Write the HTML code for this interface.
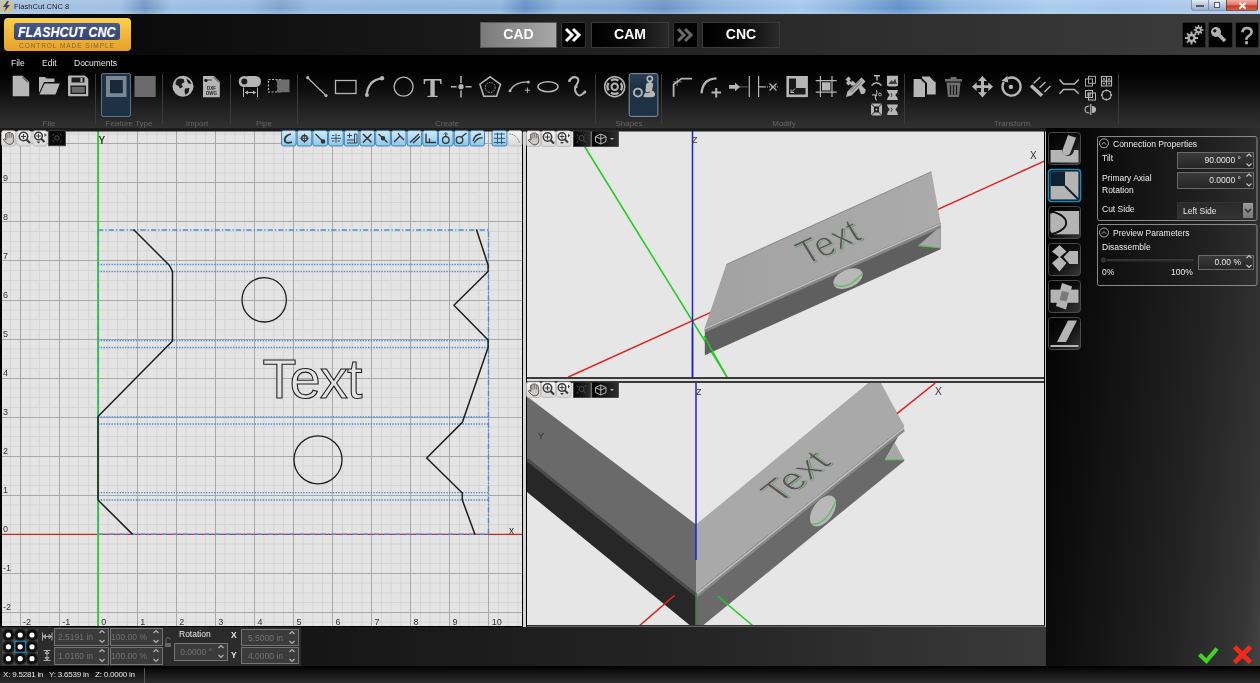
<!DOCTYPE html>
<html><head><meta charset="utf-8">
<style>
*{box-sizing:border-box}
html,body{margin:0;padding:0}
svg,div{will-change:transform}
body{width:1260px;height:683px;overflow:hidden;position:relative;background:#000;font-family:"Liberation Sans",sans-serif}
.a{position:absolute}
#title{left:0;top:0;width:1260px;height:14px;background:linear-gradient(90deg,#a4c2e2 0.0%,#a0c0e2 9.5%,#7296c4 11.5%,#9cbee2 13.5%,#98bade 19.8%,#7ea2cc 22.2%,#94b8de 24.6%,#8eb4dc 39.7%,#6490c4 41.7%,#8cb2da 44.4%,#86acd8 49.2%,#6c94c6 52.8%,#8cb2dc 56.3%,#a8c8ec 63.5%,#8ab2de 67.5%,#6090c8 71.4%,#8eb6e0 75.4%,#accced 83.3%,#a4c6ea 88.9%,#b0cdec 100.0%)}
#title:after{content:"";position:absolute;left:0;top:0;width:1260px;height:14px;background:linear-gradient(rgba(255,255,255,0.12),rgba(255,255,255,0) 60%,rgba(200,220,240,0.35))}
#title .t{left:14px;top:2px;font-size:7.6px;color:#1a1a1a;line-height:10px}
#hdr{left:0;top:14px;width:1260px;height:41px;background:linear-gradient(90deg,#050505 0%,#0a0a0a 10%,#1a1a1a 38%,#2a2a2a 62%,#3a3a3a 94%,#3c3c3c 100%)}
#menu{left:0;top:55px;width:1260px;height:15px;background:#000}
#menu span{position:absolute;top:3px;font-size:8.5px;color:#e8e8e8;line-height:10px}
#ribbon{left:0;top:70px;width:1260px;height:59px;background:linear-gradient(180deg,#000 0%,#0c0c0c 30%,#262626 75%,#323232 100%)}
.rl{position:absolute;top:49px;font-size:8px;color:#646464;line-height:9px;transform:translateX(-50%);white-space:nowrap}
.sep{position:absolute;top:4px;width:1px;height:50px;background:#3a3a3a}
#band{left:0;top:128px;width:1260px;height:3px;background:#1a1a1a}
.gl{font-size:9px;fill:#333;font-family:"Liberation Sans",sans-serif}
.btn{position:absolute;height:16px;width:15px;background:linear-gradient(#f4f4f4,#d8d8d8);border:1px solid #9a9a9a;border-radius:2px}
.bbtn{position:absolute;height:16px;width:15px;background:linear-gradient(#bfe0f6,#86bfe6);border:1px solid #4d86b0;border-radius:2px}
.dbtn{position:absolute;height:16px;background:#111;border:1px solid #333}
.inp{position:absolute;background:#3b3b3b;border:1px solid #747474;color:#737373;font-size:8.5px;line-height:16px;text-align:right;padding-right:15px;white-space:nowrap;overflow:hidden}
.pinp{position:absolute;background:linear-gradient(#3a3a3a,#262626);border:1px solid #6a6a6a;color:#e8e8e8;font-size:8.5px;line-height:15px;text-align:right;padding-right:12px;white-space:nowrap}
.pl{position:absolute;font-size:8.5px;color:#ececec;line-height:10px;white-space:nowrap}
</style></head><body>
<div id="title" class="a"><div class="a t">FlashCut CNC 8</div>
<svg class="a" style="left:1px;top:1px" width="11" height="11"><rect x="0" y="0" width="11" height="11" fill="#e8c040" opacity="0.7"/><path d="M6,0 L2,6 L5,6 L3,11 L9,4 L6,4 L8,0Z" fill="#2a3a8a"/></svg>
<div class="a" style="left:1191px;top:0;width:18px;height:11px;border:1px solid #7a8aa8;border-top:none;border-radius:0 0 0 3px;background:linear-gradient(#dde8f4,#b5c8e0 50%,#9ab2d2)"></div>
<div class="a" style="left:1196px;top:5px;width:8px;height:2px;background:#fff;border:0.5px solid #555"></div>
<div class="a" style="left:1208px;top:0;width:19px;height:11px;border:1px solid #7a8aa8;border-top:none;background:linear-gradient(#dde8f4,#b5c8e0 50%,#9ab2d2)"></div>
<div class="a" style="left:1214px;top:2px;width:6px;height:6px;border:1px solid #555;background:#eee"></div>
<div class="a" style="left:1226px;top:0;width:32px;height:11px;border:1px solid #7a3a2a;border-top:none;border-radius:0 0 3px 0;background:linear-gradient(#eea898,#e07060 45%,#c83820 60%,#d05a40)"></div>
<svg class="a" style="left:1236px;top:1px" width="12" height="10"><path d="M3.3,1.8 L9.7,7.8 M9.7,1.8 L3.3,7.8" stroke="#f4f4f4" stroke-width="2"/></svg>
</div>
<div id="hdr" class="a"></div>
<!-- logo -->
<div class="a" style="left:4px;top:18px;width:127px;height:33px;border-radius:4px;background:linear-gradient(#fccf4e,#f2b73a 50%,#e6a12c);box-shadow:0 0 1px #000"></div>
<div class="a" style="left:14px;top:23px;width:106px;height:17px;border-radius:3px;background:linear-gradient(#4a5a8c,#3a4a7c 60%,#34437a)"></div>
<div class="a" style="left:18px;top:24px;width:100px;height:16px;font-size:14px;font-weight:bold;font-style:italic;color:#fff;line-height:16px;white-space:nowrap;transform:scaleX(0.89);transform-origin:0 0;text-shadow:0 0 1px #ccc">FLASHCUT CNC</div>
<div class="a" style="left:19px;top:42px;font-size:6.5px;color:#7d6838;line-height:7px;letter-spacing:0.95px;white-space:nowrap">CONTROL MADE SIMPLE</div>
<!-- mode buttons -->
<div class="a" style="left:480px;top:22px;width:77px;height:26px;background:linear-gradient(90deg,#7a7a7a,#a8a8a8);border:1px solid #555;color:#fff;font-weight:bold;font-size:14px;line-height:23px;text-align:center">CAD</div>
<div class="a" style="left:561px;top:22px;width:25px;height:26px;background:#000;border:1px solid #333;border-radius:2px"></div>
<svg class="a" style="left:561px;top:22px" width="25" height="26"><path d="M5,7 L11,13 L5,19 M12,7 L18,13 L12,19" stroke="#fff" stroke-width="3" fill="none" stroke-linejoin="miter"/></svg>
<div class="a" style="left:591px;top:22px;width:78px;height:26px;background:linear-gradient(90deg,#000 0%,#0a0a0a 50%,#2a2a2a 100%);border:1px solid #3a3a3a;color:#fff;font-weight:bold;font-size:14px;line-height:23px;text-align:center">CAM</div>
<div class="a" style="left:673px;top:22px;width:25px;height:26px;background:#000;border:1px solid #333;border-radius:2px"></div>
<svg class="a" style="left:673px;top:22px" width="25" height="26"><path d="M5,7 L11,13 L5,19 M12,7 L18,13 L12,19" stroke="#6a6a6a" stroke-width="3" fill="none"/></svg>
<div class="a" style="left:702px;top:22px;width:78px;height:26px;background:linear-gradient(90deg,#000 0%,#0a0a0a 50%,#2a2a2a 100%);border:1px solid #3a3a3a;color:#fff;font-weight:bold;font-size:14px;line-height:23px;text-align:center">CNC</div>
<!-- right header buttons -->
<div class="a" style="left:1182px;top:22px;width:24px;height:26px;background:#000;border:1px solid #2a2a2a;border-radius:2px"></div>
<div class="a" style="left:1208px;top:22px;width:25px;height:26px;background:#000;border:1px solid #2a2a2a;border-radius:2px"></div>
<div class="a" style="left:1235px;top:22px;width:24px;height:26px;background:#000;border:1px solid #2a2a2a;border-radius:2px"></div>
<svg class="a" style="left:1182px;top:22px" width="78" height="26">
  <g fill="#b0b0b0">
    <circle cx="9.5" cy="16" r="4.2"/>
    <circle cx="16.5" cy="8" r="3.2"/>
  </g>
  <g stroke="#b0b0b0" stroke-width="2">
    <path d="M9.5,9.5 V22.5 M3,16 H16 M4.9,11.4 L14.1,20.6 M4.9,20.6 L14.1,11.4"/>
    <path d="M16.5,3 V13 M11.5,8 H21.5 M13,4.5 L20,11.5 M13,11.5 L20,4.5" stroke-width="1.6"/>
  </g>
  <circle cx="9.5" cy="16" r="1.8" fill="#000"/>
  <circle cx="16.5" cy="8" r="1.3" fill="#000"/>
  <circle cx="34" cy="10" r="5" fill="#b0b0b0"/>
  <circle cx="32.8" cy="8.8" r="1.6" fill="#000"/>
  <path d="M36,12 L43,19" stroke="#b0b0b0" stroke-width="3.5"/>
  <text x="65" y="21.5" style="font-family:'Liberation Sans',sans-serif;font-size:23px" fill="#b0b0b0" stroke="#b0b0b0" stroke-width="0.6" text-anchor="middle">?</text>
</svg>
<div id="menu" class="a"><span style="left:11px">File</span><span style="left:42px">Edit</span><span style="left:74px">Documents</span></div>
<div id="ribbon" class="a">
  <div class="rl" style="left:49px">File</div>
  <div class="rl" style="left:129px">Feature Type</div>
  <div class="rl" style="left:197px">Import</div>
  <div class="rl" style="left:264px">Pipe</div>
  <div class="rl" style="left:447px">Create</div>
  <div class="rl" style="left:629px">Shapes</div>
  <div class="rl" style="left:784px">Modify</div>
  <div class="rl" style="left:1012px">Transform</div>
  <div class="sep" style="left:95px"></div>
  <div class="sep" style="left:162px"></div>
  <div class="sep" style="left:230px"></div>
  <div class="sep" style="left:297px"></div>
  <div class="sep" style="left:595px"></div>
  <div class="sep" style="left:661px"></div>
  <div class="sep" style="left:904px"></div>
  <div class="sep" style="left:1118px"></div>
</div>
<svg class="a" style="left:0;top:0" width="1260" height="128" viewBox="0 0 1260 128">
 <g fill="#b6b6b6" stroke="none">
  <!-- new doc -->
  <path d="M12.7,75.8 H22.6 L29.2,82 V96.3 H12.7Z"/>
  <path d="M22.5,77 L28,82.5" stroke="#222" stroke-width="1"/>
  <!-- folder -->
  <path d="M39,77 H45 L46.5,78.5 H54.5 V82 H44 L39,93 Z"/>
  <path d="M44.5,83.5 H59.8 L55.5,94.5 H39.5 Z"/>
  <!-- save -->
  <path d="M68,76.5 Q68,75.5 69,75.5 H85 L88.3,78.8 V95.3 Q88.3,96.3 87.3,96.3 H69 Q68,96.3 68,95.3Z"/>
  <rect x="71.5" y="77.5" width="13" height="5" fill="#1a1a1a"/>
  <rect x="80.5" y="78" width="2" height="4" fill="#b6b6b6"/>
  <rect x="70.5" y="85.5" width="15.5" height="8.5" fill="#1a1a1a"/>
  <rect x="71.8" y="86.8" width="12.9" height="6" fill="#6a6a6a"/>
  <!-- feature type selected -->
  <rect x="101.5" y="73.5" width="29" height="43" rx="2" fill="#1d3245" stroke="#4b6b82" stroke-width="1"/>
  <rect x="106" y="76" width="20.5" height="21" fill="#7b8893"/>
  <rect x="110" y="80" width="12.8" height="13.2" fill="#182a3a"/>
  <rect x="134.5" y="76" width="21.2" height="21" fill="#6b6b6b"/>
  <!-- globe -->
  <circle cx="183" cy="86.3" r="10.5"/>
  <path d="M177,79.5 Q180,78 183.5,79 L184.5,82 L181.5,84 L183,87 L180,88.5 L178.5,86 L175.5,84.5 Q175.5,81.5 177,79.5Z M185,88.5 L189.5,88 L188.5,92.5 L185.5,95 L184.5,91.5Z M186.5,78.5 Q190,80 191.5,84 L188.5,83.5 L187,81Z" fill="#1a1a1a"/>
  <!-- dxf dwg -->
  <path d="M203,76 H214 L219.8,81.8 V97.2 H203Z"/>
  <path d="M213.5,77 L219,82.5 M204,80 H212" stroke="#1a1a1a" stroke-width="0.8"/>
  <circle cx="206" cy="80.5" r="1.6" fill="#1a1a1a"/>
  <text x="211.5" y="89.5" text-anchor="middle" style="font-family:'Liberation Sans',sans-serif;font-size:4.5px;font-weight:bold" fill="#1a1a1a">DXF</text>
  <text x="211.5" y="95" text-anchor="middle" style="font-family:'Liberation Sans',sans-serif;font-size:4.5px;font-weight:bold" fill="#1a1a1a">DWG</text>
  <!-- pipe -->
  <rect x="243" y="76" width="18" height="11" rx="5.5"/>
  <circle cx="244.3" cy="81.5" r="5.6"/>
  <circle cx="244.3" cy="81.5" r="3" fill="#1a1a1a"/>
  <path d="M243.5,87.5 V97 M257.5,87.5 V97 M245,92.5 H256" stroke="#b6b6b6" stroke-width="1" fill="none"/>
  <path d="M245,92.5 L248,90.5 V94.5Z M256,92.5 L253,90.5 V94.5Z"/>
  <rect x="268.5" y="79.5" width="12" height="12.5" fill="none" stroke="#b6b6b6" stroke-width="1.2" stroke-dasharray="2,1.5"/>
  <path d="M275,79.5 H289.5 V92.3 H275 Q279,89 276.5,86 Q279,83 275,79.5Z" fill="#6e6e6e"/>
 </g>
 <!-- create -->
 <g stroke="#b6b6b6" fill="none" stroke-width="1.3">
  <path d="M307.7,77.7 L326,95.6"/>
  <rect x="335.5" y="80.5" width="20.5" height="13"/>
  <path d="M366.7,95 Q368,80 382,78.3" stroke-width="2.3"/>
  <circle cx="403.6" cy="86.7" r="9.5" stroke-width="1.3"/>
  <path d="M461,76 V83 M461,90.5 V97.5 M451,86.7 H456.5 M465.5,86.7 H471.6" stroke-width="1.5"/>
  <path d="M490.2,76.8 L500.5,84.2 L496.6,96.3 H483.8 L479.9,84.2Z" stroke-width="1.6"/>
  <circle cx="490.2" cy="87.5" r="5" stroke-width="0.9" stroke-dasharray="1.5,1.2"/>
  <path d="M510,90.8 Q514,82 528.3,81.9" stroke-width="1.3"/>
  <path d="M527.4,87.5 V93 M524.7,90.2 H530.1" stroke-width="1"/>
  <ellipse cx="548" cy="86.7" rx="10" ry="5" stroke-width="1.5"/>
  <path d="M569.4,80.7 Q572,76 576.5,77.5 Q580,79 577,84 Q573.5,88.5 576,92.5 Q578.5,97.5 582.5,94 L584.9,92" stroke-width="2"/>
 </g>
 <g fill="#b6b6b6">
  <circle cx="307.7" cy="77.7" r="1.6"/><circle cx="326" cy="95.6" r="1.6"/>
  <circle cx="366.9" cy="95" r="2"/><circle cx="382" cy="78.3" r="2.2"/>
  <circle cx="461" cy="86.7" r="2.6"/>
  <circle cx="510" cy="90.8" r="1.5"/><circle cx="528.3" cy="81.9" r="1.5"/>
  <circle cx="569.4" cy="80.7" r="1.4"/><circle cx="576" cy="86.7" r="1.6"/><circle cx="584.9" cy="92" r="1.4"/>
  <text x="432.6" y="97" text-anchor="middle" style="font-family:'Liberation Serif',serif;font-size:28px;font-weight:bold">T</text>
 </g>
 <!-- shapes -->
 <g stroke="#b6b6b6" fill="none">
  <circle cx="614.7" cy="86.7" r="10" stroke-width="1.5"/>
  <circle cx="614.7" cy="86.7" r="3.2" stroke-width="2"/>
  <path d="M611,80.6 A7,7 0 0 1 618.4,80.6 M620.8,83 A7,7 0 0 1 620.8,90.4 M618.4,92.8 A7,7 0 0 1 611,92.8 M608.6,90.4 A7,7 0 0 1 608.6,83" stroke-width="2.2"/>
 </g>
 <defs><linearGradient id="selb" x1="0" y1="0" x2="0" y2="1"><stop offset="0" stop-color="#2a3f55"/><stop offset="0.3" stop-color="#1d3145"/><stop offset="1" stop-color="#1f3347"/></linearGradient></defs>
 <rect x="629.2" y="73.6" width="28.7" height="42.8" rx="2" fill="url(#selb)" stroke="#8593a0" stroke-width="1"/>
 <g fill="#b6b6b6" stroke="none">
  <path d="M646,84.5 Q647.5,81.5 650.5,82 Q653.5,82.5 653,85.5 L652,90.5 Q655.5,92 655,95 Q654.5,97.2 651,97.2 H644.5 Q643,97 643.5,95.5 L645.5,92.5 Z"/>
  <circle cx="649.8" cy="78.8" r="2.6" fill="none" stroke="#b6b6b6" stroke-width="1.6"/>
  <circle cx="637.9" cy="92.6" r="4" fill="none" stroke="#b6b6b6" stroke-width="1.9"/>
  <path d="M644,91.5 Q647,93.5 650,92" stroke="#1d3145" stroke-width="0.8" fill="none"/>
 </g>
 <rect x="101.5" y="73.5" width="29" height="43" rx="2" fill="none" stroke="#5a7285" stroke-width="1"/>
 <!-- modify -->
 <g stroke="#b6b6b6" fill="none" stroke-width="1.8">
  <path d="M673.6,96.8 V84.5 L681.5,78.6 H692"/>
  <path d="M677.2,78 V86 M673,81.9 H681.5" stroke-width="0.7"/>
  <path d="M701.6,93.2 Q702.5,79 716.5,78.3" stroke-width="2.3"/>
  <path d="M716.2,88 V97.5 M711.5,92.6 H721" stroke-width="2"/>
  <path d="M738.5,86.9 H747.9" stroke-width="1" stroke-dasharray="1,1"/>
  <path d="M749.3,76 V97.1 M758.6,76 V97.1 M758.6,86.9 H765" stroke-width="1.2"/>
  <path d="M765,86.9 H778.5" stroke-width="1" stroke-dasharray="1,1"/>
  <path d="M769.5,83.5 L776.5,90.5 M776.5,83.5 L769.5,90.5" stroke-width="1.3"/>
  <path d="M820.4,76 V97.1 M832,76 V97.1 M815.7,80.7 H836.7 M815.7,92.1 H836.7" stroke-width="1.2"/>
 </g>
 <g fill="#b6b6b6">
  <path d="M729,85 H735 V82.5 L740,86.9 L735,91.3 V88.8 H729Z"/>
  <rect x="786.4" y="76" width="21.5" height="21.1"/>
  <path d="M789,78.5 H796 V88 H805.5 V94.5 H789Z" fill="#1a1a1a"/>
  <path d="M791,92.5 L795,88.5 M791,92.5 V89.5 M791,92.5 H794" stroke="#b6b6b6" stroke-width="1"/>
  <rect x="822" y="82.3" width="8.4" height="8.2"/>
  <path d="M858.5,87.5 L861,85 L865.5,89.5 Q866,91 865,92.5 L864,93.5 Q862.5,94.5 861,94 Z"/>
  <path d="M845.5,79.5 L848.5,76.5 L851,79 L849.5,80.5 L851,82 L852.5,80.5 L855,83 L852,86 L850,84 L848.5,85.5 L846,83 L847.5,81.5Z"/>
  <path d="M852,84 L856.5,88.5 L858.5,86.5 L854,82Z"/>
  <path d="M846,97 L847.5,91.5 L861.5,77.5 L865.5,81.5 L851.5,95.5Z"/>
  <path d="M849.5,91 L860.5,80 M851,92.5 L862,81.5" stroke="#3a3a3a" stroke-width="0.7"/>
  <path d="M874,75.8 H880 M877,75.8 V80.5 M871.5,85.5 Q876.5,80 881.5,85.5" stroke="#b6b6b6" stroke-width="1.4" fill="none"/>
  <path d="M876.5,90 Q877.5,93 876,95 Q874.5,97.5 876.5,100.5 M872,95 Q875,94.5 877,95.5" stroke="#b6b6b6" stroke-width="1.1" fill="none"/>
  <circle cx="880" cy="94.5" r="1.4" fill="none" stroke="#b6b6b6" stroke-width="0.9"/>
  <path d="M871,104 L874,107 V112 L871,115Z M882,104 L879,107 V112 L882,115Z M871.5,103.5 H881.5 L878.5,106.5 H874.5Z M871.5,115.5 H881.5 L878.5,112.5 H874.5Z"/>
  <circle cx="876.5" cy="109.5" r="1" />
  <path d="M887,75.7 H898 V85.5 L896,86.5 H889 L887,85.5Z"/>
  <path d="M888.5,84 L891.5,80 L893,82 L895,78.5 L897,84Z" fill="#3a3a3a"/>
  <path d="M887,90 H898 L897,93 Q894,95 897,97 L898,100 H887 L888,97 Q891,95 888,93Z"/>
  <path d="M891,93 Q893,95 891,97" stroke="#3a3a3a" stroke-width="1" fill="none"/>
  <path d="M887,104.5 H898 L897,107.5 Q894,109.5 897,111.5 L898,115 H887 L888,111.5 Q891,109.5 888,107.5Z"/>
  <path d="M891,107.5 Q893,109.5 891,112" stroke="#3a3a3a" stroke-width="1" fill="none"/>
 </g>
 <!-- transform -->
 <g fill="#b6b6b6">
  <path d="M913.6,79 H921 L925,83 V97 H913.6Z"/>
  <path d="M922,76.5 H930 L935.7,82 V94.5 H927 V83 L922,78Z"/>
  <path d="M921,79.5 L924.5,83 M930,77 L935,82" stroke="#1a1a1a" stroke-width="0.8"/>
  <path d="M945,79 H962 V81.5 H945Z M950.5,77 H956.5 V79 H950.5Z" fill="#6e6e6e"/>
  <path d="M946.5,82.5 H960.5 L959,97 H948Z" fill="#6e6e6e"/>
  <path d="M950.5,85 V95 M953.5,85 V95 M956.5,85 V95" stroke="#1a1a1a" stroke-width="1.2"/>
  <path d="M982.5,76 L987,81 H984 V85.3 H988.3 V82.3 L993,86.7 L988.3,91 V88 H984 V92.3 H987 L982.5,97.4 L978,92.3 H981 V88 H976.7 V91 L972,86.7 L976.7,82.3 V85.3 H981 V81 H978Z"/>
 </g>
 <g stroke="#b6b6b6" fill="none">
  <path d="M1003.8,82 A9,9 0 1 0 1008,78.3" stroke-width="2.4"/>
  <path d="M1001.5,80.8 L1007.5,75.8 L1008.2,82.5Z" fill="#b6b6b6" stroke="none"/>
  <circle cx="1010.9" cy="86.9" r="2.2" fill="#b6b6b6" stroke="none"/>
  <path d="M1031,85.5 L1042,95.8" stroke-width="3.6"/>
  <path d="M1033.5,83.5 L1040.2,77 M1039.5,87.8 L1045.5,82 M1044.5,91.8 L1050.5,86" stroke-width="1.4"/>
  <path d="M1059.5,79.4 L1063.5,83.9 H1074.4 L1078.8,79.4 M1059.5,93.8 L1063.5,89.4 H1074.4 L1078.8,93.8" stroke-width="1.5"/>
  <rect x="1088.5" y="76.3" width="7" height="7" stroke-width="0.9"/>
  <rect x="1085.5" y="79" width="7" height="7" stroke-width="0.9"/>
  <rect x="1088.5" y="93" width="7" height="7" stroke-width="1"/>
  <rect x="1085.5" y="90.5" width="7" height="7" stroke-width="1"/>
  <path d="M1101.5,76.5 H1111.5 V86 H1101.5Z M1106.5,76.5 V86 M1101.5,81.2 H1111.5" stroke-width="1.2"/>
  <circle cx="1106.5" cy="95" r="4.6" stroke-width="1.1"/>
  <path d="M1090.8,104 V115" stroke-width="1.2"/>
  <path d="M1089.5,106 Q1085,106 1085,109.5 Q1085,113 1089.5,113" stroke-width="1.1"/>
 </g>
 <g fill="#b6b6b6">
  <circle cx="1104" cy="79" r="1"/><circle cx="1109" cy="79" r="1"/><circle cx="1104" cy="83.5" r="1"/><circle cx="1109" cy="83.5" r="1"/>
  <circle cx="1106.5" cy="90.4" r="1"/><circle cx="1106.5" cy="99.6" r="1"/><circle cx="1101.9" cy="95" r="1"/><circle cx="1111.1" cy="95" r="1"/>
  <circle cx="1103.2" cy="91.7" r="0.9"/><circle cx="1109.8" cy="91.7" r="0.9"/><circle cx="1103.2" cy="98.3" r="0.9"/><circle cx="1109.8" cy="98.3" r="0.9"/>
  <path d="M1092,106 Q1096,106 1096,109.5 Q1096,113 1092,113Z"/>
  <rect x="1087" y="92.5" width="4" height="4" opacity="0.6"/>
 </g>
</svg>

<div id="band" class="a"></div>

<!-- 2D view -->
<svg class="a" style="left:0;top:0" width="526" height="627" viewBox="0 0 526 627">
  <rect x="0" y="131" width="522" height="495" fill="#e4e4e4"/>
<line x1="0.5" y1="131" x2="0.5" y2="626" stroke="#d6d6d6" stroke-width="1.1"/>
<line x1="10.5" y1="131" x2="10.5" y2="626" stroke="#d6d6d6" stroke-width="1.1"/>
<line x1="30.0" y1="131" x2="30.0" y2="626" stroke="#d6d6d6" stroke-width="1.1"/>
<line x1="39.5" y1="131" x2="39.5" y2="626" stroke="#d6d6d6" stroke-width="1.1"/>
<line x1="49.5" y1="131" x2="49.5" y2="626" stroke="#d6d6d6" stroke-width="1.1"/>
<line x1="69.0" y1="131" x2="69.0" y2="626" stroke="#d6d6d6" stroke-width="1.1"/>
<line x1="78.5" y1="131" x2="78.5" y2="626" stroke="#d6d6d6" stroke-width="1.1"/>
<line x1="88.5" y1="131" x2="88.5" y2="626" stroke="#d6d6d6" stroke-width="1.1"/>
<line x1="108.0" y1="131" x2="108.0" y2="626" stroke="#d6d6d6" stroke-width="1.1"/>
<line x1="117.5" y1="131" x2="117.5" y2="626" stroke="#d6d6d6" stroke-width="1.1"/>
<line x1="127.5" y1="131" x2="127.5" y2="626" stroke="#d6d6d6" stroke-width="1.1"/>
<line x1="147.0" y1="131" x2="147.0" y2="626" stroke="#d6d6d6" stroke-width="1.1"/>
<line x1="157.0" y1="131" x2="157.0" y2="626" stroke="#d6d6d6" stroke-width="1.1"/>
<line x1="166.5" y1="131" x2="166.5" y2="626" stroke="#d6d6d6" stroke-width="1.1"/>
<line x1="186.0" y1="131" x2="186.0" y2="626" stroke="#d6d6d6" stroke-width="1.1"/>
<line x1="196.0" y1="131" x2="196.0" y2="626" stroke="#d6d6d6" stroke-width="1.1"/>
<line x1="205.5" y1="131" x2="205.5" y2="626" stroke="#d6d6d6" stroke-width="1.1"/>
<line x1="225.0" y1="131" x2="225.0" y2="626" stroke="#d6d6d6" stroke-width="1.1"/>
<line x1="235.0" y1="131" x2="235.0" y2="626" stroke="#d6d6d6" stroke-width="1.1"/>
<line x1="244.5" y1="131" x2="244.5" y2="626" stroke="#d6d6d6" stroke-width="1.1"/>
<line x1="264.0" y1="131" x2="264.0" y2="626" stroke="#d6d6d6" stroke-width="1.1"/>
<line x1="274.0" y1="131" x2="274.0" y2="626" stroke="#d6d6d6" stroke-width="1.1"/>
<line x1="283.5" y1="131" x2="283.5" y2="626" stroke="#d6d6d6" stroke-width="1.1"/>
<line x1="303.0" y1="131" x2="303.0" y2="626" stroke="#d6d6d6" stroke-width="1.1"/>
<line x1="313.0" y1="131" x2="313.0" y2="626" stroke="#d6d6d6" stroke-width="1.1"/>
<line x1="322.5" y1="131" x2="322.5" y2="626" stroke="#d6d6d6" stroke-width="1.1"/>
<line x1="342.5" y1="131" x2="342.5" y2="626" stroke="#d6d6d6" stroke-width="1.1"/>
<line x1="352.0" y1="131" x2="352.0" y2="626" stroke="#d6d6d6" stroke-width="1.1"/>
<line x1="362.0" y1="131" x2="362.0" y2="626" stroke="#d6d6d6" stroke-width="1.1"/>
<line x1="381.5" y1="131" x2="381.5" y2="626" stroke="#d6d6d6" stroke-width="1.1"/>
<line x1="391.0" y1="131" x2="391.0" y2="626" stroke="#d6d6d6" stroke-width="1.1"/>
<line x1="401.0" y1="131" x2="401.0" y2="626" stroke="#d6d6d6" stroke-width="1.1"/>
<line x1="420.5" y1="131" x2="420.5" y2="626" stroke="#d6d6d6" stroke-width="1.1"/>
<line x1="430.0" y1="131" x2="430.0" y2="626" stroke="#d6d6d6" stroke-width="1.1"/>
<line x1="440.0" y1="131" x2="440.0" y2="626" stroke="#d6d6d6" stroke-width="1.1"/>
<line x1="459.5" y1="131" x2="459.5" y2="626" stroke="#d6d6d6" stroke-width="1.1"/>
<line x1="469.0" y1="131" x2="469.0" y2="626" stroke="#d6d6d6" stroke-width="1.1"/>
<line x1="479.0" y1="131" x2="479.0" y2="626" stroke="#d6d6d6" stroke-width="1.1"/>
<line x1="498.5" y1="131" x2="498.5" y2="626" stroke="#d6d6d6" stroke-width="1.1"/>
<line x1="508.0" y1="131" x2="508.0" y2="626" stroke="#d6d6d6" stroke-width="1.1"/>
<line x1="518.0" y1="131" x2="518.0" y2="626" stroke="#d6d6d6" stroke-width="1.1"/>
<line x1="0" y1="622.0" x2="522" y2="622.0" stroke="#d6d6d6" stroke-width="1.1"/>
<line x1="0" y1="602.5" x2="522" y2="602.5" stroke="#d6d6d6" stroke-width="1.1"/>
<line x1="0" y1="593.0" x2="522" y2="593.0" stroke="#d6d6d6" stroke-width="1.1"/>
<line x1="0" y1="583.0" x2="522" y2="583.0" stroke="#d6d6d6" stroke-width="1.1"/>
<line x1="0" y1="563.5" x2="522" y2="563.5" stroke="#d6d6d6" stroke-width="1.1"/>
<line x1="0" y1="554.0" x2="522" y2="554.0" stroke="#d6d6d6" stroke-width="1.1"/>
<line x1="0" y1="544.0" x2="522" y2="544.0" stroke="#d6d6d6" stroke-width="1.1"/>
<line x1="0" y1="524.5" x2="522" y2="524.5" stroke="#d6d6d6" stroke-width="1.1"/>
<line x1="0" y1="515.0" x2="522" y2="515.0" stroke="#d6d6d6" stroke-width="1.1"/>
<line x1="0" y1="505.0" x2="522" y2="505.0" stroke="#d6d6d6" stroke-width="1.1"/>
<line x1="0" y1="485.5" x2="522" y2="485.5" stroke="#d6d6d6" stroke-width="1.1"/>
<line x1="0" y1="475.5" x2="522" y2="475.5" stroke="#d6d6d6" stroke-width="1.1"/>
<line x1="0" y1="466.0" x2="522" y2="466.0" stroke="#d6d6d6" stroke-width="1.1"/>
<line x1="0" y1="446.5" x2="522" y2="446.5" stroke="#d6d6d6" stroke-width="1.1"/>
<line x1="0" y1="436.5" x2="522" y2="436.5" stroke="#d6d6d6" stroke-width="1.1"/>
<line x1="0" y1="427.0" x2="522" y2="427.0" stroke="#d6d6d6" stroke-width="1.1"/>
<line x1="0" y1="407.5" x2="522" y2="407.5" stroke="#d6d6d6" stroke-width="1.1"/>
<line x1="0" y1="397.5" x2="522" y2="397.5" stroke="#d6d6d6" stroke-width="1.1"/>
<line x1="0" y1="388.0" x2="522" y2="388.0" stroke="#d6d6d6" stroke-width="1.1"/>
<line x1="0" y1="368.5" x2="522" y2="368.5" stroke="#d6d6d6" stroke-width="1.1"/>
<line x1="0" y1="358.5" x2="522" y2="358.5" stroke="#d6d6d6" stroke-width="1.1"/>
<line x1="0" y1="349.0" x2="522" y2="349.0" stroke="#d6d6d6" stroke-width="1.1"/>
<line x1="0" y1="329.5" x2="522" y2="329.5" stroke="#d6d6d6" stroke-width="1.1"/>
<line x1="0" y1="319.5" x2="522" y2="319.5" stroke="#d6d6d6" stroke-width="1.1"/>
<line x1="0" y1="310.0" x2="522" y2="310.0" stroke="#d6d6d6" stroke-width="1.1"/>
<line x1="0" y1="290.0" x2="522" y2="290.0" stroke="#d6d6d6" stroke-width="1.1"/>
<line x1="0" y1="280.5" x2="522" y2="280.5" stroke="#d6d6d6" stroke-width="1.1"/>
<line x1="0" y1="270.5" x2="522" y2="270.5" stroke="#d6d6d6" stroke-width="1.1"/>
<line x1="0" y1="251.0" x2="522" y2="251.0" stroke="#d6d6d6" stroke-width="1.1"/>
<line x1="0" y1="241.5" x2="522" y2="241.5" stroke="#d6d6d6" stroke-width="1.1"/>
<line x1="0" y1="231.5" x2="522" y2="231.5" stroke="#d6d6d6" stroke-width="1.1"/>
<line x1="0" y1="212.0" x2="522" y2="212.0" stroke="#d6d6d6" stroke-width="1.1"/>
<line x1="0" y1="202.5" x2="522" y2="202.5" stroke="#d6d6d6" stroke-width="1.1"/>
<line x1="0" y1="192.5" x2="522" y2="192.5" stroke="#d6d6d6" stroke-width="1.1"/>
<line x1="0" y1="173.0" x2="522" y2="173.0" stroke="#d6d6d6" stroke-width="1.1"/>
<line x1="0" y1="163.5" x2="522" y2="163.5" stroke="#d6d6d6" stroke-width="1.1"/>
<line x1="0" y1="153.5" x2="522" y2="153.5" stroke="#d6d6d6" stroke-width="1.1"/>
<line x1="0" y1="134.0" x2="522" y2="134.0" stroke="#d6d6d6" stroke-width="1.1"/>
<line x1="20.5" y1="131" x2="20.5" y2="626" stroke="#a8a8a8"/>
<line x1="59.5" y1="131" x2="59.5" y2="626" stroke="#a8a8a8"/>
<line x1="98.5" y1="131" x2="98.5" y2="626" stroke="#a8a8a8"/>
<line x1="137.5" y1="131" x2="137.5" y2="626" stroke="#a8a8a8"/>
<line x1="176.5" y1="131" x2="176.5" y2="626" stroke="#a8a8a8"/>
<line x1="215.5" y1="131" x2="215.5" y2="626" stroke="#a8a8a8"/>
<line x1="254.5" y1="131" x2="254.5" y2="626" stroke="#a8a8a8"/>
<line x1="293.5" y1="131" x2="293.5" y2="626" stroke="#a8a8a8"/>
<line x1="332.5" y1="131" x2="332.5" y2="626" stroke="#a8a8a8"/>
<line x1="371.5" y1="131" x2="371.5" y2="626" stroke="#a8a8a8"/>
<line x1="410.5" y1="131" x2="410.5" y2="626" stroke="#a8a8a8"/>
<line x1="449.5" y1="131" x2="449.5" y2="626" stroke="#a8a8a8"/>
<line x1="488.5" y1="131" x2="488.5" y2="626" stroke="#a8a8a8"/>
<line x1="0" y1="612.5" x2="522" y2="612.5" stroke="#a8a8a8"/>
<line x1="0" y1="573.5" x2="522" y2="573.5" stroke="#a8a8a8"/>
<line x1="0" y1="534.5" x2="522" y2="534.5" stroke="#a8a8a8"/>
<line x1="0" y1="495.5" x2="522" y2="495.5" stroke="#a8a8a8"/>
<line x1="0" y1="456.5" x2="522" y2="456.5" stroke="#a8a8a8"/>
<line x1="0" y1="417.5" x2="522" y2="417.5" stroke="#a8a8a8"/>
<line x1="0" y1="378.5" x2="522" y2="378.5" stroke="#a8a8a8"/>
<line x1="0" y1="339.5" x2="522" y2="339.5" stroke="#a8a8a8"/>
<line x1="0" y1="300.5" x2="522" y2="300.5" stroke="#a8a8a8"/>
<line x1="0" y1="260.5" x2="522" y2="260.5" stroke="#a8a8a8"/>
<line x1="0" y1="221.5" x2="522" y2="221.5" stroke="#a8a8a8"/>
<line x1="0" y1="182.5" x2="522" y2="182.5" stroke="#a8a8a8"/>
<line x1="0" y1="143.5" x2="522" y2="143.5" stroke="#a8a8a8"/>
<text x="3" y="610.4" class="gl">-2</text>
<text x="3" y="571.3" class="gl">-1</text>
<text x="3" y="532.3" class="gl">0</text>
<text x="3" y="493.2" class="gl">1</text>
<text x="3" y="454.2" class="gl">2</text>
<text x="3" y="415.1" class="gl">3</text>
<text x="3" y="376.1" class="gl">4</text>
<text x="3" y="337.0" class="gl">5</text>
<text x="3" y="298.0" class="gl">6</text>
<text x="3" y="258.9" class="gl">7</text>
<text x="3" y="219.9" class="gl">8</text>
<text x="3" y="180.8" class="gl">9</text>
<text x="23.1" y="624.5" class="gl">-2</text>
<text x="62.2" y="624.5" class="gl">-1</text>
<text x="101.2" y="624.5" class="gl">0</text>
<text x="140.2" y="624.5" class="gl">1</text>
<text x="179.3" y="624.5" class="gl">2</text>
<text x="218.3" y="624.5" class="gl">3</text>
<text x="257.4" y="624.5" class="gl">4</text>
<text x="296.4" y="624.5" class="gl">5</text>
<text x="335.5" y="624.5" class="gl">6</text>
<text x="374.5" y="624.5" class="gl">7</text>
<text x="413.6" y="624.5" class="gl">8</text>
<text x="452.6" y="624.5" class="gl">9</text>
<text x="491.7" y="624.5" class="gl">10</text>
  <line x1="0" y1="534.3" x2="522" y2="534.3" stroke="#dd2222" stroke-width="1.3"/>
  <!-- blue dashed -->
  <g stroke="#4a8cd6" stroke-width="1.4" fill="none">
    <path d="M98,230 H488.5 V534.3" stroke-dasharray="5.3,2,1.3,2"/>
    <path d="M98,264.5 H488.5 M98,271.6 H488.5 M98,340.5 H488.5 M98,347.5 H488.5 M98,417 H488.5 M98,424 H488.5 M98,492.6 H488.5 M98,500 H488.5" stroke-dasharray="1.4,1.3" stroke-width="1.3"/>
    <path d="M98,534.3 H488.5" stroke-dasharray="5.3,2,1.3,2"/>
  </g>
  <!-- axes -->
  <line x1="98.1" y1="131" x2="98.1" y2="626" stroke="#33cc33" stroke-width="2"/>
  <path d="M98,230 V534.3" stroke="#4a8cd6" stroke-width="1" stroke-dasharray="5.3,2,1.3,2" fill="none" opacity="0.8"/>
  <text x="98.5" y="144" class="gl" style="font-size:10px;font-weight:bold;fill:#3a3a3a">Y</text>
  <text x="509" y="534" class="gl" style="font-size:10px">x</text>
  <!-- geometry -->
  <g stroke="#1e1e1e" stroke-width="1.5" fill="none" stroke-linejoin="round">
    <path d="M133.5,229.5 L169.5,265.5 L172.5,271.5 L172.5,341 L98,416.5 L98,500 L132.6,534.4"/>
    <path d="M476.4,229.4 L488.1,265 L488.1,271.5 L453.9,305.3 L488.1,340 L488.1,347.5 L462.3,422.4 L426.7,458 L462.3,493 L462.3,500 L475,534.4"/>
    <circle cx="264.2" cy="299.8" r="22.2" stroke-width="1.3"/>
    <circle cx="318" cy="459.8" r="24" stroke-width="1.3"/>
  </g>
  <text x="262.5" y="397.8" style="font-family:'Liberation Sans',sans-serif;font-size:55.5px;letter-spacing:-0.6px" fill="#e4e4e4" stroke="#1e1e1e" stroke-width="1.1">Text</text>
</svg>


<!-- splitter -->
<div class="a" style="left:522px;top:130px;width:5px;height:497px;background:#d6d6d6;border-left:1px solid #000;border-right:1px solid #000"></div>
<!-- 3D views -->
<svg class="a" style="left:0;top:0" width="1046" height="627" viewBox="0 0 1046 627">
  <defs>
    <clipPath id="c1"><rect x="527" y="130" width="517" height="247"/></clipPath>
    <clipPath id="c2"><rect x="527" y="383" width="517" height="242"/></clipPath>
    <linearGradient id="gtop" x1="0" y1="0" x2="1" y2="0"><stop offset="0" stop-color="#a2a2a2"/><stop offset="1" stop-color="#ababab"/></linearGradient>
  </defs>
  <rect x="526" y="130" width="520" height="497" fill="#000"/>
  <rect x="1045" y="130" width="1" height="497" fill="#c8c8c8"/>
  <rect x="527" y="130" width="517" height="247" fill="#e6e6e6"/>
  <rect x="527" y="377" width="517" height="2" fill="#3a3a3a"/>
  <rect x="527" y="379" width="517" height="2" fill="#dcdcdc"/>
  <rect x="527" y="381" width="517" height="2" fill="#3a3a3a"/>
  <rect x="527" y="383" width="517" height="242" fill="#e6e6e6"/>
  <rect x="527" y="625" width="518" height="1.5" fill="#333"/>
  <rect x="527" y="626.5" width="519" height="1" fill="#b0b0b0"/>
  <g clip-path="url(#c1)">
    <line x1="575" y1="131" x2="727" y2="377" stroke="#22cc22" stroke-width="1.5"/>
    <line x1="568.4" y1="377" x2="1045" y2="160.8" stroke="#dd2222" stroke-width="1.5"/>
    <line x1="692.5" y1="131" x2="692.5" y2="377" stroke="#1f1fd6" stroke-width="1.5"/>
    <polygon points="726.3,264.5 931.4,171.7 940.6,223 704.8,327.6" fill="url(#gtop)"/>
    <polygon points="704.8,327.6 940.6,223 940.6,249.2 704.8,355.3" fill="#5f5f5f"/>
    <polygon points="918.4,245.6 940.6,226 940.6,248" fill="#a8a8a8"/>
    <line x1="918.4" y1="245.6" x2="940.3" y2="247.6" stroke="#66bb66" stroke-width="1.2"/>
    <line x1="705" y1="331" x2="940.6" y2="226.5" stroke="#858585" stroke-width="2.5"/><line x1="705" y1="328.8" x2="940.6" y2="224.3" stroke="#bcbcbc" stroke-width="1.8"/>
    <line x1="726.3" y1="264.5" x2="931.4" y2="171.7" stroke="#7a7a7a" stroke-width="0.8"/>
    <ellipse cx="848" cy="278.6" rx="15.5" ry="9" transform="rotate(-24 848 278.6)" fill="#b8b8b8"/>
    <path d="M834,284 Q846,292 862,274" stroke="#5cc05c" stroke-width="1.3" fill="none"/>
    <g transform="matrix(1.057,-0.498,0.621,1.009,805.3,266.1)"><text x="0.7" y="0.9" style="font-family:'Liberation Sans',sans-serif;font-size:30px" fill="#5a9a5a">Text</text><text x="0" y="0" style="font-family:'Liberation Sans',sans-serif;font-size:30px" fill="#555" stroke="#a9a9a9" stroke-width="0.8">Text</text></g>
    <line x1="692.5" y1="327.5" x2="692.5" y2="377" stroke="#1f1fd6" stroke-width="1.5"/>
    <line x1="704" y1="336" x2="727" y2="377" stroke="#22cc22" stroke-width="1.5"/>
    <text x="692" y="143" class="gl" style="font-size:9px">Z</text>
    <text x="1030" y="159" class="gl" style="font-size:10px">X</text>
  </g>
  <g clip-path="url(#c2)">
    <polygon points="527,380 522,380 527,396.5 696,524.6 696,594.2 527,458.7" fill="#6a6a6a"/>
    <polygon points="527,458.7 696,594.2 696,627 692,627 527,492" fill="#272727"/>
    <line x1="527" y1="459.5" x2="696" y2="595" stroke="#4a4a4a" stroke-width="3"/>
    <polygon points="696,524.6 869.4,382 880.4,382 904.2,425.8 696,592.4" fill="#a9a9a9"/>
    <polygon points="696,592.4 904.2,425.8 885,459.7 904.2,459.7 904.2,461 701,627 696,627" fill="#6a6a6a"/>
    <polygon points="885,459.7 894.6,442.6 904.2,459.7" fill="#a8a8a8"/>
    <line x1="885" y1="459.7" x2="904.2" y2="459.7" stroke="#66bb66" stroke-width="1.2"/>
    <line x1="697" y1="596" x2="904.2" y2="430" stroke="#888" stroke-width="2.5"/><line x1="697" y1="593.5" x2="904.2" y2="427.5" stroke="#bcbcbc" stroke-width="1.8"/>
    <line x1="696" y1="594" x2="696" y2="627" stroke="#4a7a4a" stroke-width="1.5"/>
    <ellipse cx="823" cy="511" rx="17.5" ry="10" transform="rotate(-54 823 511)" fill="#b8b8b8"/>
    <path d="M812,524 Q826,526 836,500" stroke="#5cc05c" stroke-width="1.3" fill="none"/>
    <g transform="matrix(0.98,-0.76,0.995,0.717,778.6,505)"><text x="0.7" y="0.9" style="font-family:'Liberation Sans',sans-serif;font-size:30px" fill="#5a9a5a">Text</text><text x="0" y="0" style="font-family:'Liberation Sans',sans-serif;font-size:30px" fill="#555" stroke="#a9a9a9" stroke-width="0.8">Text</text></g>
    <line x1="638" y1="627" x2="674.5" y2="595.4" stroke="#dd2222" stroke-width="1.5"/>
    <line x1="897" y1="413.7" x2="935.3" y2="383" stroke="#dd2222" stroke-width="1.5"/>
    <line x1="717.7" y1="596" x2="754.3" y2="627" stroke="#22cc22" stroke-width="1.5"/>
    <line x1="696" y1="383" x2="696" y2="560" stroke="#1f1fd6" stroke-width="1.5"/>
    <text x="538" y="439" class="gl" style="font-size:9px">Y</text>
    <text x="696" y="395" class="gl" style="font-size:9px">Z</text>
    <text x="935" y="395" class="gl" style="font-size:10px">X</text>
  </g>
</svg>

<!-- 2D toolbar -->
<div class="a" style="left:0;top:130px;width:2px;height:497px;background:#000"></div>
<svg class="a" style="left:0;top:128px" width="1260" height="22" viewBox="0 128 1260 22">
 <defs>
  <linearGradient id="wb" x1="0" y1="0" x2="0" y2="1"><stop offset="0" stop-color="#fafafa"/><stop offset="1" stop-color="#d6d6d6"/></linearGradient>
  <linearGradient id="db" x1="0" y1="0" x2="1" y2="0"><stop offset="0" stop-color="#000"/><stop offset="1" stop-color="#2e2e2e"/></linearGradient>
  <linearGradient id="bb" x1="0" y1="0" x2="0" y2="1"><stop offset="0" stop-color="#d2ecfb"/><stop offset="1" stop-color="#8ac6ec"/></linearGradient>
  <g id="hand"><path d="M4.5,5 Q4.3,3.3 5.8,3.3 Q6.5,2.2 8,2.6 Q9.3,2 10.3,3.2 Q12,3.2 12.2,5 L12.8,9.5 Q13.2,13.5 9.8,14.3 Q7,14.8 5.5,13 L2.6,10.2 Q2,9.2 3.2,8.9 Q4,8.9 5,9.8 Z" fill="#cdc9c4" stroke="#4a4a4a" stroke-width="0.9"/><path d="M6,3.5 V8 M8.2,2.8 V7.8 M10.3,3.3 V8" stroke="#4a4a4a" stroke-width="0.7"/></g>
  <g id="zoom"><circle cx="6.5" cy="6.5" r="4.2" fill="none" stroke="#3a3a3a" stroke-width="1.6"/><path d="M6.5,4 V9 M4,6.5 H9" stroke="#3a3a3a" stroke-width="1.1"/><path d="M9.5,9.5 L13,13" stroke="#3a3a3a" stroke-width="2.2"/></g>
  <g id="zoom2"><circle cx="5.5" cy="6" r="3.8" fill="none" stroke="#3a3a3a" stroke-width="1.5"/><path d="M5.5,3.7 V8.3 M3.2,6 H7.8" stroke="#3a3a3a" stroke-width="1"/><path d="M8.2,8.7 L11.5,12" stroke="#3a3a3a" stroke-width="2"/><path d="M11.5,3 L13.5,5 L11.5,7Z M3.5,11.5 L5.5,13.5 L7.5,11.5Z" fill="#3a3a3a"/></g>
 </defs>
 <rect x="0" y="128" width="1046" height="3.5" fill="#1c1c1c"/>
 <!-- 2D left -->
 <rect x="1.5" y="130.8" width="14" height="15.2" rx="2" fill="url(#wb)" stroke="#b8b8b8" stroke-width="0.8"/>
 <rect x="17" y="130.8" width="14" height="15.2" rx="2" fill="url(#wb)" stroke="#b8b8b8" stroke-width="0.8"/>
 <rect x="33" y="130.8" width="14" height="15.2" rx="2" fill="url(#wb)" stroke="#b8b8b8" stroke-width="0.8"/>
 <rect x="48.6" y="130.5" width="17" height="15.3" fill="#0a0a0a" stroke="#444" stroke-width="0.8"/>
 <use href="#hand" x="1" y="130"/><use href="#zoom" x="17" y="130"/><use href="#zoom2" x="33" y="130"/>
 <g stroke="#555" stroke-width="0.9" fill="none"><circle cx="57" cy="138" r="2.2"/><path d="M54,134 L52.5,135.5 M60,134 L61.5,135.5 M54,142 L52.5,140.5 M60,142 L61.5,141.5"/></g>
 <!-- 2D snap blue -->
 <g stroke="#3a76a6" stroke-width="0.9">
  <rect x="281.5" y="130.6" width="14.6" height="15.4" rx="2" fill="url(#bb)"/>
  <rect x="297.2" y="130.6" width="14.6" height="15.4" rx="2" fill="url(#bb)"/>
  <rect x="312.9" y="130.6" width="14.6" height="15.4" rx="2" fill="url(#bb)"/>
  <rect x="328.6" y="130.6" width="14.6" height="15.4" rx="2" fill="url(#bb)"/>
  <rect x="344.3" y="130.6" width="14.6" height="15.4" rx="2" fill="url(#bb)"/>
  <rect x="360" y="130.6" width="14.6" height="15.4" rx="2" fill="url(#bb)"/>
  <rect x="375.7" y="130.6" width="14.6" height="15.4" rx="2" fill="url(#bb)"/>
  <rect x="391.4" y="130.6" width="14.6" height="15.4" rx="2" fill="url(#bb)"/>
  <rect x="407.1" y="130.6" width="14.6" height="15.4" rx="2" fill="url(#bb)"/>
  <rect x="422.8" y="130.6" width="14.6" height="15.4" rx="2" fill="url(#bb)"/>
  <rect x="438.5" y="130.6" width="14.6" height="15.4" rx="2" fill="url(#bb)"/>
  <rect x="454.2" y="130.6" width="14.6" height="15.4" rx="2" fill="url(#bb)"/>
  <rect x="469.9" y="130.6" width="14.6" height="15.4" rx="2" fill="url(#bb)"/>
  <rect x="492" y="130.6" width="15" height="15.4" rx="2" fill="url(#bb)"/>
 </g>
 <rect x="507.8" y="130.8" width="14.2" height="15.2" rx="2" fill="url(#wb)" stroke="#b8b8b8" stroke-width="0.8"/>
 <g stroke="#333" fill="none" stroke-width="1.3">
  <path d="M291,134 Q283.5,136 285,141.5 Q287,144 292,142" stroke-width="1.8"/>
  <circle cx="304.5" cy="138.3" r="2.8"/><path d="M304.5,133.5 V143 M299.7,138.3 H309.3" stroke-width="0.8"/>
  <path d="M315.5,134 L322.5,141"/><circle cx="323" cy="141.5" r="1.6" fill="#333"/>
  <path d="M336,133.5 V143 M331,138.3 H341 M332,135.5 H334.5 M337.5,135.5 H340 M332,141 H334.5 M337.5,141 H340" stroke-width="0.8"/>
  <path d="M347,135.5 H352 M349.5,133 V138 M347,143 H357 V134 H354.5 V143 M347,140 H354.5" stroke-width="0.9"/>
  <path d="M363,134 L371.5,142.5 M371.5,134 L363,142.5" stroke-width="1.5"/>
  <path d="M378.5,134 L387.5,142.5"/><circle cx="383" cy="138.3" r="1.6" fill="#333"/>
  <path d="M394,142 L400,136 L404,140 M400,136 L398,133"/>
  <path d="M410,142.5 L419,134 M413,143 L420,136.5"/>
  <path d="M426,133.5 V142.5 H436 M429.5,138.5 V142.5 H434"/>
  <circle cx="445.8" cy="140" r="3.3"/><path d="M445.8,136.5 V133.5" /><path d="M443.5,134.5 L445.8,132.5 L448,134.5" stroke-width="0.8"/>
  <circle cx="459.5" cy="140" r="3.3"/><path d="M461.5,137 L466.5,133"/>
  <path d="M473,141 Q475,134 481,134 M474,143 Q478,137 482.5,138" />
  <path d="M494,134 H505 M494,138.3 H505 M494,142.5 H505 M497.5,132.5 V144 M501.5,132.5 V144" stroke-width="0.9" stroke="#2a4a6a"/>
  <path d="M509.5,134 Q517,134.5 519.5,143" stroke="#555" stroke-width="0.9" stroke-dasharray="1.2,0.9"/>
 </g>
 <!-- 3D top toolbar -->
 <rect x="526.5" y="131" width="14" height="15.5" rx="2" fill="url(#wb)" stroke="#b8b8b8" stroke-width="0.8"/>
 <rect x="541.5" y="131" width="14" height="15.5" rx="2" fill="url(#wb)" stroke="#b8b8b8" stroke-width="0.8"/>
 <rect x="556.5" y="131" width="14.5" height="15.5" rx="2" fill="url(#wb)" stroke="#b8b8b8" stroke-width="0.8"/>
 <rect x="573.5" y="131" width="17" height="15.5" fill="url(#db)" stroke="#3a3a3a" stroke-width="0.8"/>
 <rect x="591.8" y="131" width="26.6" height="15.5" fill="url(#db)" stroke="#3a3a3a" stroke-width="0.8"/>
 <use href="#hand" x="526" y="130.5"/><use href="#zoom" x="541" y="130.5"/><use href="#zoom2" x="556.5" y="130.5"/>
 <g stroke="#555" stroke-width="0.9" fill="none"><circle cx="581.5" cy="138" r="2.6"/><path d="M583.5,140 L586,142.5 M576.5,134.5 L578,136 M586,134 L584.5,135.5 M576.5,142.5 L578,141"/></g>
 <g stroke="#c8c8c8" stroke-width="0.9" fill="none"><path d="M595.5,136.5 L600.8,134.0 L606,136.5 V141.5 L600.8,144.0 L595.5,141.5Z M595.5,136.5 L600.8,139.0 L606,136.5 M600.8,139.0 V144.0 M600.8,134.0 V139.0"/></g>
 <path d="M610,138 H614 L612,140Z" fill="#bbb"/>
</svg>
<svg class="a" style="left:0;top:380px" width="1260" height="20" viewBox="0 380 1260 20">
 <rect x="526.5" y="382" width="14" height="15.5" rx="2" fill="url(#wb)" stroke="#b8b8b8" stroke-width="0.8"/>
 <rect x="541.5" y="382" width="14" height="15.5" rx="2" fill="url(#wb)" stroke="#b8b8b8" stroke-width="0.8"/>
 <rect x="556.5" y="382" width="14.5" height="15.5" rx="2" fill="url(#wb)" stroke="#b8b8b8" stroke-width="0.8"/>
 <rect x="573.5" y="382" width="17" height="15.5" fill="url(#db)" stroke="#3a3a3a" stroke-width="0.8"/>
 <rect x="591.8" y="382" width="26.6" height="15.5" fill="url(#db)" stroke="#3a3a3a" stroke-width="0.8"/>
 <use href="#hand" x="526" y="381.5"/><use href="#zoom" x="541" y="381.5"/><use href="#zoom2" x="556.5" y="381.5"/>
 <g stroke="#555" stroke-width="0.9" fill="none"><circle cx="581.5" cy="389" r="2.6"/><path d="M583.5,391 L586,393.5 M576.5,385.5 L578,387 M586,385 L584.5,386.5 M576.5,393.5 L578,392"/></g>
 <g stroke="#c8c8c8" stroke-width="0.9" fill="none"><path d="M595.5,387.5 L600.8,385.0 L606,387.5 V392.5 L600.8,395.0 L595.5,392.5Z M595.5,387.5 L600.8,390.0 L606,387.5 M600.8,390.0 V395.0 M600.8,385.0 V390.0"/></g>
 <path d="M610,389 H614 L612,391Z" fill="#bbb"/>
</svg>

<!-- main bottom bar -->
<div class="a" style="left:0;top:627px;width:1046px;height:40px;background:linear-gradient(90deg,#111 0%,#161616 30%,#262626 70%,#3a3a3a 100%)"></div>
<div class="a" style="left:0;top:627px;width:301px;height:39px;background:#2b2b2b"></div>
<!-- right panel bg -->
<div class="a" style="left:1046px;top:128px;width:214px;height:539px;background:linear-gradient(96deg,#000 0%,#101010 30%,#222 65%,#353535 92%,#444 100%)"></div>
<!-- right strip -->
<svg class="a" style="left:1046px;top:128px" width="214" height="540" viewBox="1046 128 214 540">
 <defs>
  <linearGradient id="rb" x1="0" y1="0" x2="1" y2="1"><stop offset="0" stop-color="#000"/><stop offset="0.5" stop-color="#0e0e0e"/><stop offset="1" stop-color="#383838"/></linearGradient>
 </defs>
 <g stroke="#4a4a4a" stroke-width="1" fill="url(#rb)">
  <rect x="1048.5" y="132.5" width="32" height="32" rx="3"/>
  <rect x="1048.5" y="206.5" width="32" height="32" rx="3"/>
  <rect x="1048.5" y="243.5" width="32" height="32" rx="3"/>
  <rect x="1048.5" y="280.5" width="32" height="32" rx="3"/>
  <rect x="1048.5" y="317.5" width="32" height="32" rx="3"/>
 </g>
 <rect x="1048.5" y="169.5" width="32" height="32" rx="3" fill="#0a0a0a" stroke="#1a8cc4" stroke-width="1.6"/>
 <g fill="#b4b4b4">
  <path d="M1050.5,150 H1062 A6,6 0 0 0 1074,150 H1078.5 V162.5 H1050.5Z"/>
  <path d="M1068,135 L1076,137.8 L1070.5,152.5 A4,4 0 0 1 1062.5,150Z"/>
  <rect x="1050.5" y="171.5" width="28" height="28"/>
  <path d="M1050.5,171.5 H1065 V186 H1050.5Z" fill="#0d2234"/>
  <path d="M1065,186 L1078.5,199.5" stroke="#0d2234" stroke-width="2"/>
  <rect x="1053.8" y="211" width="25.3" height="23.3"/>
  <path d="M1054,212 Q1050.3,212 1050.3,215.5 V230 Q1050.3,233.5 1054,233.5 Q1066.5,229 1066.3,222.7 Q1066.5,216.5 1054,212Z" stroke="#151515" stroke-width="1.6"/>
  <path d="M1051.5,214 Q1051,213.5 1051,216 V229.5 Q1051,232 1053,232.3" stroke="#b4b4b4" stroke-width="1.5" fill="none"/>
  <path d="M1054,212 Q1062,214.5 1065.2,219 Q1067,222.7 1065.2,226.5 Q1062,231 1054,233.5" stroke="#151515" stroke-width="1.6" fill="none"/>
  <path d="M1062,283 L1072,286.5 L1066,309.5 L1056,306Z"/>
  <path d="M1052,251.5 L1059.5,245 L1066.5,251.5 L1059.5,257.5Z M1052,263 L1059.5,256.5 L1066.5,263 L1059.5,271.5Z M1063.5,257 L1069.5,251 H1078 V264 H1069.5Z"/>
  <rect x="1050.5" y="289.6" width="28" height="13.2"/>
  <path d="M1062,291 L1069,292.5 L1066.5,301.5 L1059.5,300Z" fill="#7a7a7a"/>
  <path d="M1057,342 L1068,320.5 H1077 L1066,342Z"/>
  <rect x="1050.5" y="345" width="28" height="2"/>
 </g>
 <!-- group boxes -->
 <rect x="1097.5" y="136.5" width="159.5" height="84" rx="2" fill="none" stroke="#8a8a8a" stroke-width="1"/>
 <rect x="1097.5" y="224.5" width="159.5" height="61" rx="2" fill="none" stroke="#8a8a8a" stroke-width="1"/>
 <circle cx="1104" cy="143.3" r="4.5" fill="none" stroke="#bbb" stroke-width="0.9"/>
 <path d="M1102,144.5 L1104,142.3 L1106,144.5" fill="none" stroke="#bbb" stroke-width="0.9"/>
 <circle cx="1104" cy="232.5" r="4.5" fill="none" stroke="#bbb" stroke-width="0.9"/>
 <path d="M1102,233.7 L1104,231.5 L1106,233.7" fill="none" stroke="#bbb" stroke-width="0.9"/>
 <!-- slider -->
 <rect x="1102" y="259.3" width="91" height="1.6" fill="#222" stroke="#4a4a4a" stroke-width="0.6"/>
 <circle cx="1103.5" cy="260" r="3" fill="#333" stroke="#111" stroke-width="0.8"/>
 <!-- check / x -->
 <path d="M1199.5,654.5 L1206.4,661 L1217,648.5" fill="none" stroke="#3fd224" stroke-width="4.2" stroke-linejoin="miter"/>
 <path d="M1234.5,646.8 L1250.5,662.5 M1250.5,646.8 L1234.5,662.5" fill="none" stroke="#ee2a1a" stroke-width="4.8"/>
</svg>
<div class="pl" style="left:1113px;top:138.5px;font-size:8.5px">Connection Properties</div>
<div class="pl" style="left:1102px;top:153px">Tilt</div>
<div class="pl" style="left:1102px;top:173px">Primary Axial</div>
<div class="pl" style="left:1102px;top:185px">Rotation</div>
<div class="pl" style="left:1102px;top:204px">Cut Side</div>
<div class="pinp" style="left:1177px;top:152px;width:77px;height:17px">90.0000 °</div>
<div class="pinp" style="left:1177px;top:172px;width:77px;height:17px">0.0000 °</div>
<div class="pinp" style="left:1177px;top:202px;width:77px;height:17px;text-align:left;padding-left:5px;padding-top:1px;border-color:#333;background:linear-gradient(#2a2a2a,#323232)">Left Side</div>
<div class="a" style="left:1243px;top:203px;width:10px;height:15px;background:linear-gradient(#9a9a9a,#7a7a7a)"></div>
<svg class="a" style="left:1243px;top:203px" width="10" height="15"><path d="M2,6 L5,9 L8,6" stroke="#222" stroke-width="1.3" fill="none"/></svg>
<div class="pl" style="left:1113px;top:228px;font-size:8.5px">Preview Parameters</div>
<div class="pl" style="left:1102px;top:242px">Disassemble</div>
<div class="pl" style="left:1102px;top:267px">0%</div>
<div class="pl" style="left:1171px;top:267px">100%</div>
<div class="pinp" style="left:1198px;top:255px;width:56px;height:15px;line-height:13px">0.00 %</div>
<svg class="a" style="left:1244px;top:152px" width="12" height="120">
 <g stroke="#c8c8c8" stroke-width="1.1" fill="none">
  <path d="M2.5,4.5 L5,2 L7.5,4.5 M2.5,11.5 L5,14 L7.5,11.5"/>
  <path d="M2.5,24.5 L5,22 L7.5,24.5 M2.5,31.5 L5,34 L7.5,31.5"/>
  <path d="M2.5,106 L5,103.5 L7.5,106 M2.5,113 L5,115.5 L7.5,113"/>
 </g>
</svg>

<!-- bottom transform bar -->
<svg class="a" style="left:0;top:626px" width="302" height="41" viewBox="0 626 302 41">
 <defs>
  <radialGradient id="cell" cx="0.5" cy="0.5" r="0.7"><stop offset="0" stop-color="#000"/><stop offset="0.6" stop-color="#111"/><stop offset="1" stop-color="#5a5a5a"/></radialGradient>
 </defs>
 <rect x="2.5" y="629" width="35.3" height="35.7" fill="#4a4a4a"/>
 <g fill="url(#cell)">
  <rect x="2.5" y="629" width="11.8" height="11.9"/><rect x="14.3" y="629" width="11.8" height="11.9"/><rect x="26.1" y="629" width="11.8" height="11.9"/>
  <rect x="2.5" y="640.9" width="11.8" height="11.9"/><rect x="14.3" y="640.9" width="11.8" height="11.9"/><rect x="26.1" y="640.9" width="11.8" height="11.9"/>
  <rect x="2.5" y="652.8" width="11.8" height="11.9"/><rect x="14.3" y="652.8" width="11.8" height="11.9"/><rect x="26.1" y="652.8" width="11.8" height="11.9"/>
 </g>
 <rect x="14.8" y="641.3" width="10.8" height="11" fill="none" stroke="#1e90c8" stroke-width="1"/>
 <g fill="#fff">
  <circle cx="8.4" cy="635" r="2.6"/><circle cx="20.2" cy="635" r="2.6"/><circle cx="32" cy="635" r="2.6"/>
  <circle cx="8.4" cy="646.8" r="2.6"/><circle cx="20.2" cy="646.8" r="2.6"/><circle cx="32" cy="646.8" r="2.6"/>
  <circle cx="8.4" cy="658.7" r="2.6"/><circle cx="20.2" cy="658.7" r="2.6"/><circle cx="32" cy="658.7" r="2.6"/>
 </g>
 <g stroke="#aaa" stroke-width="1" fill="none">
  <path d="M42.5,632.5 V640.5 M52,632.5 V640.5 M43,636.5 H51.5 M43,636.5 L45.5,634.5 V638.5Z M51.5,636.5 L49,634.5 V638.5Z"/>
  <path d="M43.5,650.5 H50.5 M43.5,660.5 H50.5 M47,651 V660 M47,651 L45,653.5 H49Z M47,660 L45,657.5 H49Z"/>
  <path d="M166,643 V639.5 Q166,637.5 168,637.5 Q170,637.5 170,639.5" stroke="#666"/>
 </g>
 <rect x="165" y="643" width="6" height="4" fill="#666"/>
</svg>
<div class="inp" style="left:54px;top:628px;width:55px;height:18px">2.5191 in</div>
<div class="inp" style="left:110px;top:628px;width:53px;height:18px">100.00 %</div>
<div class="inp" style="left:54px;top:647px;width:55px;height:18px">1.0160 in</div>
<div class="inp" style="left:110px;top:647px;width:53px;height:18px">100.00 %</div>
<div class="a" style="left:179px;top:629px;font-size:8.5px;color:#e8e8e8;line-height:10px">Rotation</div>
<div class="inp" style="left:174px;top:643px;width:54px;height:18px">0.0000 °</div>
<div class="a" style="left:231px;top:630px;font-size:8.5px;color:#e8e8e8;line-height:10px;font-weight:bold">X</div>
<div class="a" style="left:231px;top:650px;font-size:8.5px;color:#e8e8e8;line-height:10px;font-weight:bold">Y</div>
<div class="inp" style="left:241px;top:629px;width:58px;height:17px">5.5000 in</div>
<div class="inp" style="left:241px;top:647px;width:58px;height:17px">4.0000 in</div>
<svg class="a" style="left:0;top:626px" width="302" height="41" viewBox="0 626 302 41">
 <g stroke="#b4b4b4" stroke-width="1.2" fill="none">
  <path d="M99.5,633 L102,630.5 L104.5,633 M99.5,640 L102,642.5 L104.5,640"/>
  <path d="M153.5,633 L156,630.5 L158.5,633 M153.5,640 L156,642.5 L158.5,640"/>
  <path d="M99.5,652 L102,649.5 L104.5,652 M99.5,659 L102,661.5 L104.5,659"/>
  <path d="M153.5,652 L156,649.5 L158.5,652 M153.5,659 L156,661.5 L158.5,659"/>
  <path d="M218.5,648 L221,645.5 L223.5,648 M218.5,655 L221,657.5 L223.5,655"/>
  <path d="M289.5,634 L292,631.5 L294.5,634 M289.5,641 L292,643.5 L294.5,641"/>
  <path d="M289.5,652 L292,649.5 L294.5,652 M289.5,659 L292,661.5 L294.5,659"/>
 </g>
</svg>

<!-- status -->
<div class="a" style="left:0;top:666px;width:1260px;height:17px;background:linear-gradient(#000 0%,#141414 40%,#2e2e2e 100%)"></div>
<div class="a" style="left:3px;top:670px;font-size:8px;color:#e8e8e8;line-height:10px;white-space:nowrap;letter-spacing:-0.2px">X: 9.5281 in</div><div class="a" style="left:49px;top:670px;font-size:8px;color:#e8e8e8;line-height:10px;white-space:nowrap;letter-spacing:-0.2px">Y: 3.6539 in</div><div class="a" style="left:95px;top:670px;font-size:8px;color:#e8e8e8;line-height:10px;white-space:nowrap;letter-spacing:-0.2px">Z: 0.0000 in</div>
<div class="a" style="left:144px;top:668px;width:1px;height:15px;background:#555"></div>
</body></html>
